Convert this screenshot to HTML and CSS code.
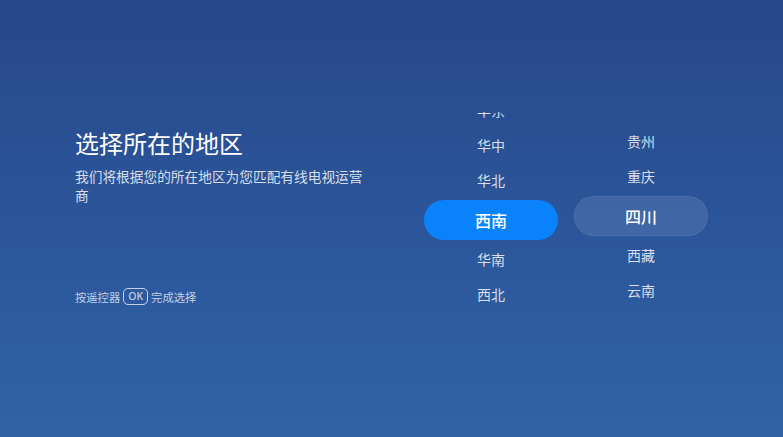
FILE: index.html
```html
<!DOCTYPE html>
<html lang="zh-CN">
<head>
  <meta charset="UTF-8">
  <title>选择所在的地区</title>
  <link rel="stylesheet" href="styles.css">
</head>
<body>

  <div class="screen">
    <div class="intro">
      <h1 class="title">选择所在的地区</h1>
      <p class="desc">我们将根据您的所在地区为您匹配有线电视运营商</p>
      <div class="hint">按遥控器 <span class="key">OK</span> 完成选择</div>
    </div>

    <div class="pickers">
      <div class="column column-region">
        <ul class="list">
          <li class="item">华东</li>
          <li class="item">华中</li>
          <li class="item">华北</li>
          <li class="item item-active">西南</li>
          <li class="item">华南</li>
          <li class="item">西北</li>
        </ul>
      </div>
      <div class="column column-city">
        <ul class="list">
          <li class="item">贵州</li>
          <li class="item">重庆</li>
          <li class="item item-focus">四川</li>
          <li class="item">西藏</li>
          <li class="item">云南</li>
        </ul>
      </div>
    </div>
  </div>

</body>
</html>
```

FILE: styles.css
```css
html, body {
  margin: 0;
  height: 100%;
}
body {
  font-family: "Noto Sans CJK SC", "Noto Sans", sans-serif;
  background: linear-gradient(180deg, #27488a 0%, #2b559a 50%, #3063a6 100%);
  color: #fff;
  overflow: hidden;
}
.screen {
  display: flex;
  height: 437px;
  padding-left: 75px;
  box-sizing: border-box;
}
.intro {
  width: 349px;
  padding-top: 126px;
}
.title {
  margin: 0;
  font-size: 24px;
  font-weight: 400;
  line-height: 34px;
}
.desc {
  margin: 7px 0 0;
  width: 295px;
  font-size: 13.7px;
  line-height: 19px;
  color: rgba(255, 255, 255, 0.82);
}
.hint {
  margin-top: 83px;
  display: flex;
  align-items: center;
  gap: 3px;
  font-size: 11.3px;
  line-height: 16px;
  color: rgba(255, 255, 255, 0.72);
}
.key {
  display: inline-block;
  padding: 0 4px;
  border: 1px solid rgba(255, 255, 255, 0.72);
  border-radius: 5px;
  font-family: "Noto Sans", sans-serif;
  font-size: 10.5px;
  font-weight: 500;
  line-height: 15px;
}
.pickers {
  display: flex;
  gap: 16px;
  padding-top: 112px;
}
.column {
  width: 134px;
  height: 210px;
  overflow: hidden;
}
.list {
  list-style: none;
  margin: 0;
  padding: 0;
}
.column-region .list {
  margin-top: -19.5px;
}
.column-city .list {
  margin-top: 11.5px;
}
.item {
  height: 35px;
  display: flex;
  align-items: center;
  justify-content: center;
  font-size: 14px;
  color: rgba(255, 255, 255, 0.82);
}
.item-active,
.item-focus {
  height: 40px;
  margin: 2px 0;
  border-radius: 20px;
  font-size: 16px;
  font-weight: 500;
  color: #fff;
}
.item-active {
  background: #0a82fc;
}
.item-focus {
  background: rgba(255, 255, 255, 0.1);
  box-shadow: inset 0 0 0 1px rgba(255, 255, 255, 0.06);
}
```
